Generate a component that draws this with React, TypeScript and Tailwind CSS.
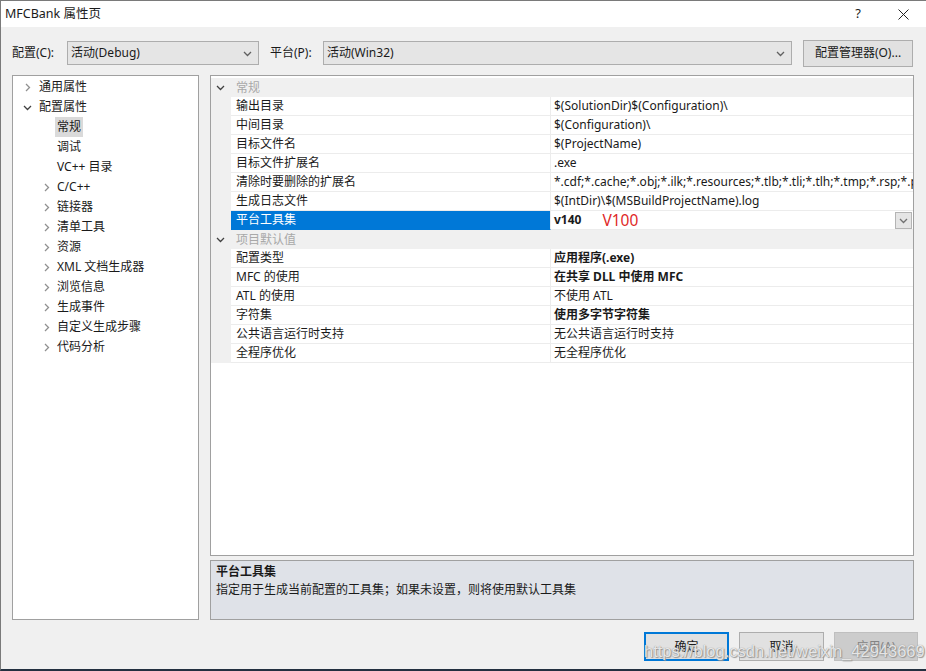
import React from "react";

const FONT = { fontFamily: '"Noto Sans", "Noto Sans CJK SC", sans-serif' };

function Chev({ open, color = "#808080" }: { open?: boolean; color?: string }) {
  return (
    <svg width="9" height="9" viewBox="0 0 9 9" className="shrink-0">
      {open ? (
        <polyline points="1,3 4.5,6.5 8,3" fill="none" stroke={color} strokeWidth="1.3" />
      ) : (
        <polyline points="3,1 6.5,4.5 3,8" fill="none" stroke={color} strokeWidth="1.3" />
      )}
    </svg>
  );
}

type TreeItem = { label: string; level: number; kind: "closed" | "open" | "leaf"; selected?: boolean };

const TREE: TreeItem[] = [
  { label: "通用属性", level: 1, kind: "closed" },
  { label: "配置属性", level: 1, kind: "open" },
  { label: "常规", level: 2, kind: "leaf", selected: true },
  { label: "调试", level: 2, kind: "leaf" },
  { label: "VC++ 目录", level: 2, kind: "leaf" },
  { label: "C/C++", level: 2, kind: "closed" },
  { label: "链接器", level: 2, kind: "closed" },
  { label: "清单工具", level: 2, kind: "closed" },
  { label: "资源", level: 2, kind: "closed" },
  { label: "XML 文档生成器", level: 2, kind: "closed" },
  { label: "浏览信息", level: 2, kind: "closed" },
  { label: "生成事件", level: 2, kind: "closed" },
  { label: "自定义生成步骤", level: 2, kind: "closed" },
  { label: "代码分析", level: 2, kind: "closed" },
];

type Row = { cat?: string; name?: string; value?: string; bold?: boolean; selected?: boolean };

const ROWS: Row[] = [
  { cat: "常规" },
  { name: "输出目录", value: "$(SolutionDir)$(Configuration)\\" },
  { name: "中间目录", value: "$(Configuration)\\" },
  { name: "目标文件名", value: "$(ProjectName)" },
  { name: "目标文件扩展名", value: ".exe" },
  { name: "清除时要删除的扩展名", value: "*.cdf;*.cache;*.obj;*.ilk;*.resources;*.tlb;*.tli;*.tlh;*.tmp;*.rsp;*.pgc;*.pgd;*.meta;*.tlog;*.manifest;*.res;*.pch;*.exp;*.idb;*.rep;*.xdc;*.pdb;*_manifest.rc;*.bsc;*.sbr;*.xml;*.metagen;*.bi" },
  { name: "生成日志文件", value: "$(IntDir)\\$(MSBuildProjectName).log" },
  { name: "平台工具集", value: "v140", bold: true, selected: true },
  { cat: "项目默认值" },
  { name: "配置类型", value: "应用程序(.exe)", bold: true },
  { name: "MFC 的使用", value: "在共享 DLL 中使用 MFC", bold: true },
  { name: "ATL 的使用", value: "不使用 ATL" },
  { name: "字符集", value: "使用多字节字符集", bold: true },
  { name: "公共语言运行时支持", value: "无公共语言运行时支持" },
  { name: "全程序优化", value: "无全程序优化" },
];

function Combo({ text, width }: { text: string; width: string }) {
  return (
    <div className={`${width} h-[24px] bg-[#e5e5e5] border border-[#adadad] flex items-center pl-[3px] pr-[6px]`}>
      <span className="flex-1">{text}</span>
      <Chev open color="#606060" />
    </div>
  );
}

export default function App() {
  return (
    <div
      style={FONT}
      className="relative w-[926px] h-[671px] bg-[#f0f0f0] text-[12px] text-[#1a1a1a] flex flex-col border-l border-t border-[#7a7a7a] border-b-2 border-b-[#233040] overflow-hidden"
    >
      {/* title bar */}
      <div className="h-[26px] bg-white flex items-center pl-[4px] shrink-0">
        <span className="flex-1 text-[12.5px]">MFCBank 属性页</span>
        <span className="w-[20px] text-center text-[13px] mr-[30px]">?</span>
        <svg width="11" height="11" viewBox="0 0 11 11" className="mr-[17px]">
          <path d="M0.5 0.5 L10.5 10.5 M10.5 0.5 L0.5 10.5" stroke="#222" strokeWidth="1" />
        </svg>
      </div>

      {/* toolbar */}
      <div className="flex items-center h-[26px] mt-[13px] pl-[11px] pr-[12px] shrink-0">
        <span className="w-[55px]">配置(C):</span>
        <Combo text="活动(Debug)" width="w-[192px]" />
        <span className="ml-[11px] w-[53px]">平台(P):</span>
        <Combo text="活动(Win32)" width="w-[469px]" />
        <div className="ml-[11px] w-[110px] h-[27px] bg-[#e1e1e1] border border-[#adadad] flex items-center justify-center">
          配置管理器(O)...
        </div>
      </div>

      {/* main panels */}
      <div className="flex mt-[9px] pl-[11px] h-[545px] shrink-0">
        {/* tree */}
        <div className="w-[187px] h-full bg-white border border-[#a0a0a0] pt-[1px]">
          {TREE.map((t) => (
            <div key={t.label} className="h-[20px] flex items-center">
              <div className={t.level === 1 ? "w-[26px] pl-[10px] flex" : "w-[44px] pl-[29px] flex"}>
                {t.kind !== "leaf" && <Chev open={t.kind === "open"} color={t.kind === "open" ? "#404040" : "#909090"} />}
              </div>
              <span className={t.selected ? "bg-[#dadada] px-[2px] leading-[20px] -ml-[2px]" : ""}>{t.label}</span>
            </div>
          ))}
        </div>

        {/* right column */}
        <div className="ml-[11px] w-[704px] h-full flex flex-col">
          <div className="h-[481px] bg-white border border-[#a0a0a0] pt-[2px] overflow-hidden">
            {ROWS.map((r, i) =>
              r.cat ? (
                <div key={i} className="h-[19px] bg-[#f0f0f0] flex items-center">
                  <div className="w-[20px] pl-[5px] flex">
                    <Chev open color="#404040" />
                  </div>
                  <span className="pl-[5px] text-[#a8a8a8]">{r.cat}</span>
                </div>
              ) : (
                <div key={i} className="h-[19px] flex">
                  <div className="w-[20px] bg-[#f0f0f0]" />
                  <div
                    className={`w-[320px] pl-[5px] flex items-center border-b border-r border-[#ececec] ${
                      r.selected ? "bg-[#0078d7] text-white border-b-[#0078d7]" : ""
                    }`}
                  >
                    {r.name}
                  </div>
                  <div className="flex-1 min-w-0 pl-[3px] flex items-center border-b border-[#ececec] whitespace-nowrap overflow-hidden">
                    <span className={r.bold ? "font-bold" : ""}>{r.value}</span>
                    {r.selected && (
                      <>
                        <span className="ml-[21px] text-[#e02828] text-[15.5px] leading-[19px]">V100</span>
                        <span className="flex-1" />
                        <div className="w-[17px] h-[17px] bg-[#e5e5e5] border border-[#b4b4b4] flex items-center justify-center mr-[1px]">
                          <Chev open color="#707070" />
                        </div>
                      </>
                    )}
                  </div>
                </div>
              )
            )}
          </div>
          <div className="mt-[4px] h-[60px] bg-[#dfe2e8] border border-[#a0a0a0] pl-[5px] pt-[2px] leading-[18px]">
            <div className="font-bold">平台工具集</div>
            <div>指定用于生成当前配置的工具集；如果未设置，则将使用默认工具集</div>
          </div>
        </div>
      </div>

      {/* buttons */}
      <div className="flex justify-end mt-[12px] pr-[8px] gap-[10px] shrink-0">
        <div className="w-[85px] h-[29px] bg-[#e1e1e1] border-2 border-[#0078d7] flex items-center justify-center">确定</div>
        <div className="w-[85px] h-[29px] bg-[#e1e1e1] border border-[#adadad] flex items-center justify-center">取消</div>
        <div className="w-[84px] h-[29px] bg-[#cccccc] border border-[#bfbfbf] text-[#838383] flex items-center justify-center">应用(A)</div>
      </div>

      {/* watermark */}
      <div
        className="absolute left-[643px] top-[640px] text-[16.5px] leading-[20px] text-white/80 whitespace-nowrap pointer-events-none"
        style={{ fontFamily: '"Liberation Sans", Arial, sans-serif', textShadow: "0 0 1px #777, 1px 1px 1px #999" }}
      >
        https://blog.csdn.net/weixin_42943669
      </div>
    </div>
  );
}
